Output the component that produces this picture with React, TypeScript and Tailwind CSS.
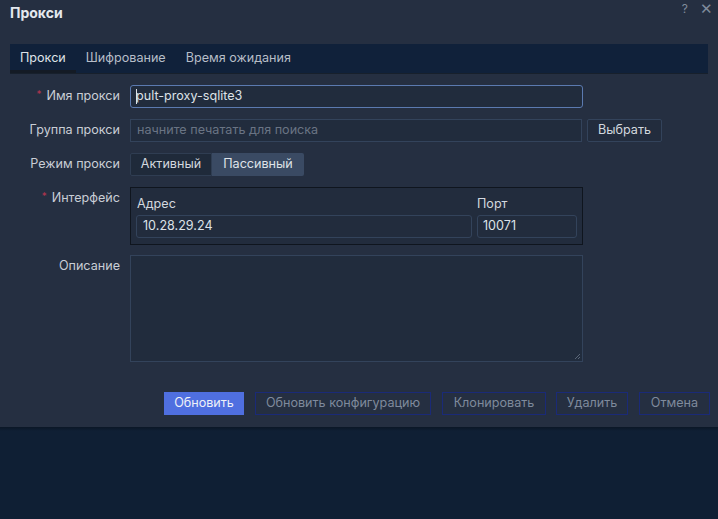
import React from "react";

const font = { fontFamily: "Inter, 'Noto Sans', 'Liberation Sans', sans-serif" };

function Label({ text, required }: { text: string; required?: boolean }) {
  return (
    <div className="w-[110px] shrink-0 h-[23px] flex items-center justify-end text-[12.6px] text-[#c9ced6]">
      {required && <span className="text-[#b3354f] text-[10px] mr-[5px] -mt-[4px]">*</span>}
      <span>{text}</span>
    </div>
  );
}

export default function App() {
  return (
    <div className="w-[718px] h-[519px] bg-[#0f1f34] flex flex-col" style={font}>
      <div className="h-[427px] bg-[#252f41] flex flex-col relative">
        <div className="absolute right-[5px] top-[-2px] flex items-center gap-[12px] text-[#7f8b9b]">
          <span className="text-[12px]">?</span>
          <span className="text-[15px]">✕</span>
        </div>
        <div className="pl-[10px] pt-[2px] h-[44px] text-[14px] font-bold text-[#e4e8ee]">Прокси</div>
        <div className="mx-[10px] h-[30px] bg-[#10213a] border-b border-[#17202c] flex items-stretch text-[12.6px]">
          <div className="px-[10px] flex items-center text-[#dfe3e8] border-b-[3px] border-[#141b25] pt-[3px]">Прокси</div>
          <div className="px-[10px] flex items-center text-[#b7bec8]">Шифрование</div>
          <div className="px-[10px] flex items-center text-[#b7bec8]">Время ожидания</div>
        </div>
        <div className="flex flex-col gap-[11px] pt-[11px]">
          <div className="flex gap-[10px] pl-[10px]">
            <Label text="Имя прокси" required />
            <div className="w-[453px] h-[23px] rounded-[3px] border border-[#5b7ab0] bg-[#212c3d] flex items-center pl-[5px] text-[12.6px] text-[#dde2e8]">
              <span className="w-px h-[15px] bg-[#dde2e8] -mr-px" />
              pult-proxy-sqlite3
            </div>
          </div>
          <div className="flex gap-[10px] pl-[10px]">
            <Label text="Группа прокси" />
            <div className="w-[452px] h-[23px] border border-[#33435b] bg-[#212c3d] flex items-center pl-[6px] text-[12.6px] text-[#6a7484]">
              начните печатать для поиска
            </div>
            <div className="ml-[-5px] w-[75px] h-[23px] rounded-[2px] border border-[#33435b] bg-[#222c3d] flex items-center justify-center text-[12.6px] text-[#d3d8df]">
              Выбрать
            </div>
          </div>
          <div className="flex gap-[10px] pl-[10px]">
            <Label text="Режим прокси" />
            <div className="flex h-[23px] text-[12.6px]">
              <div className="w-[82px] border border-[#2f3d52] bg-[#1f2a3a] flex items-center justify-center text-[#d3d8df] rounded-l-[2px]">Активный</div>
              <div className="w-[92px] bg-[#3a4a63] flex items-center justify-center text-[#dfe3e8] rounded-r-[2px]">Пассивный</div>
            </div>
          </div>
          <div className="flex gap-[10px] pl-[10px]">
            <Label text="Интерфейс" required />
            <div className="w-[453px] h-[58px] border border-[#0f151e] bg-[#222c3d] flex gap-[5px] px-[5px] pt-[5px]">
              <div className="flex flex-col w-[336px]">
                <div className="h-[22px] text-[12.6px] text-[#d3d8df] flex items-center pl-[1px]">Адрес</div>
                <div className="h-[23px] rounded-[3px] border border-[#33435b] flex items-center pl-[6px] text-[12.6px] text-[#dde2e8]">10.28.29.24</div>
              </div>
              <div className="flex flex-col w-[100px]">
                <div className="h-[22px] text-[12.6px] text-[#d3d8df] flex items-center">Порт</div>
                <div className="h-[23px] rounded-[3px] border border-[#33435b] flex items-center pl-[5px] text-[12.6px] text-[#dde2e8]">10071</div>
              </div>
            </div>
          </div>
          <div className="flex gap-[10px] pl-[10px] mt-[-1px]">
            <Label text="Описание" />
            <div className="relative w-[453px] h-[107px] border border-[#33435b] bg-[#212c3d]">
              <svg className="absolute right-[1px] bottom-[1px]" width="7" height="7" viewBox="0 0 7 7">
                <path d="M6 1 L1 6 M6 4 L4 6" stroke="#5a6678" strokeWidth="1" />
              </svg>
            </div>
          </div>
        </div>
        <div className="flex justify-end pr-[8px] mt-[30px] text-[12.6px]">
          <div className="w-[80px] h-[23px] bg-[#4f6fe0] flex items-center justify-center text-[#eef1f8]">Обновить</div>
          <div className="ml-[11px] w-[176px] h-[23px] border border-[#1a2a78] flex items-center justify-center text-[#7f8a9c]">Обновить конфигурацию</div>
          <div className="ml-[11px] w-[104px] h-[23px] border border-[#1a2a78] flex items-center justify-center text-[#7f8a9c]">Клонировать</div>
          <div className="ml-[10px] w-[72px] h-[23px] border border-[#1a2a78] flex items-center justify-center text-[#7f8a9c]">Удалить</div>
          <div className="ml-[11px] w-[71px] h-[23px] border border-[#1a2a78] flex items-center justify-center text-[#7f8a9c]">Отмена</div>
        </div>
      </div>
      <div className="h-[4px] bg-gradient-to-b from-[#0b1726] to-[#0f1f34]" />
    </div>
  );
}
